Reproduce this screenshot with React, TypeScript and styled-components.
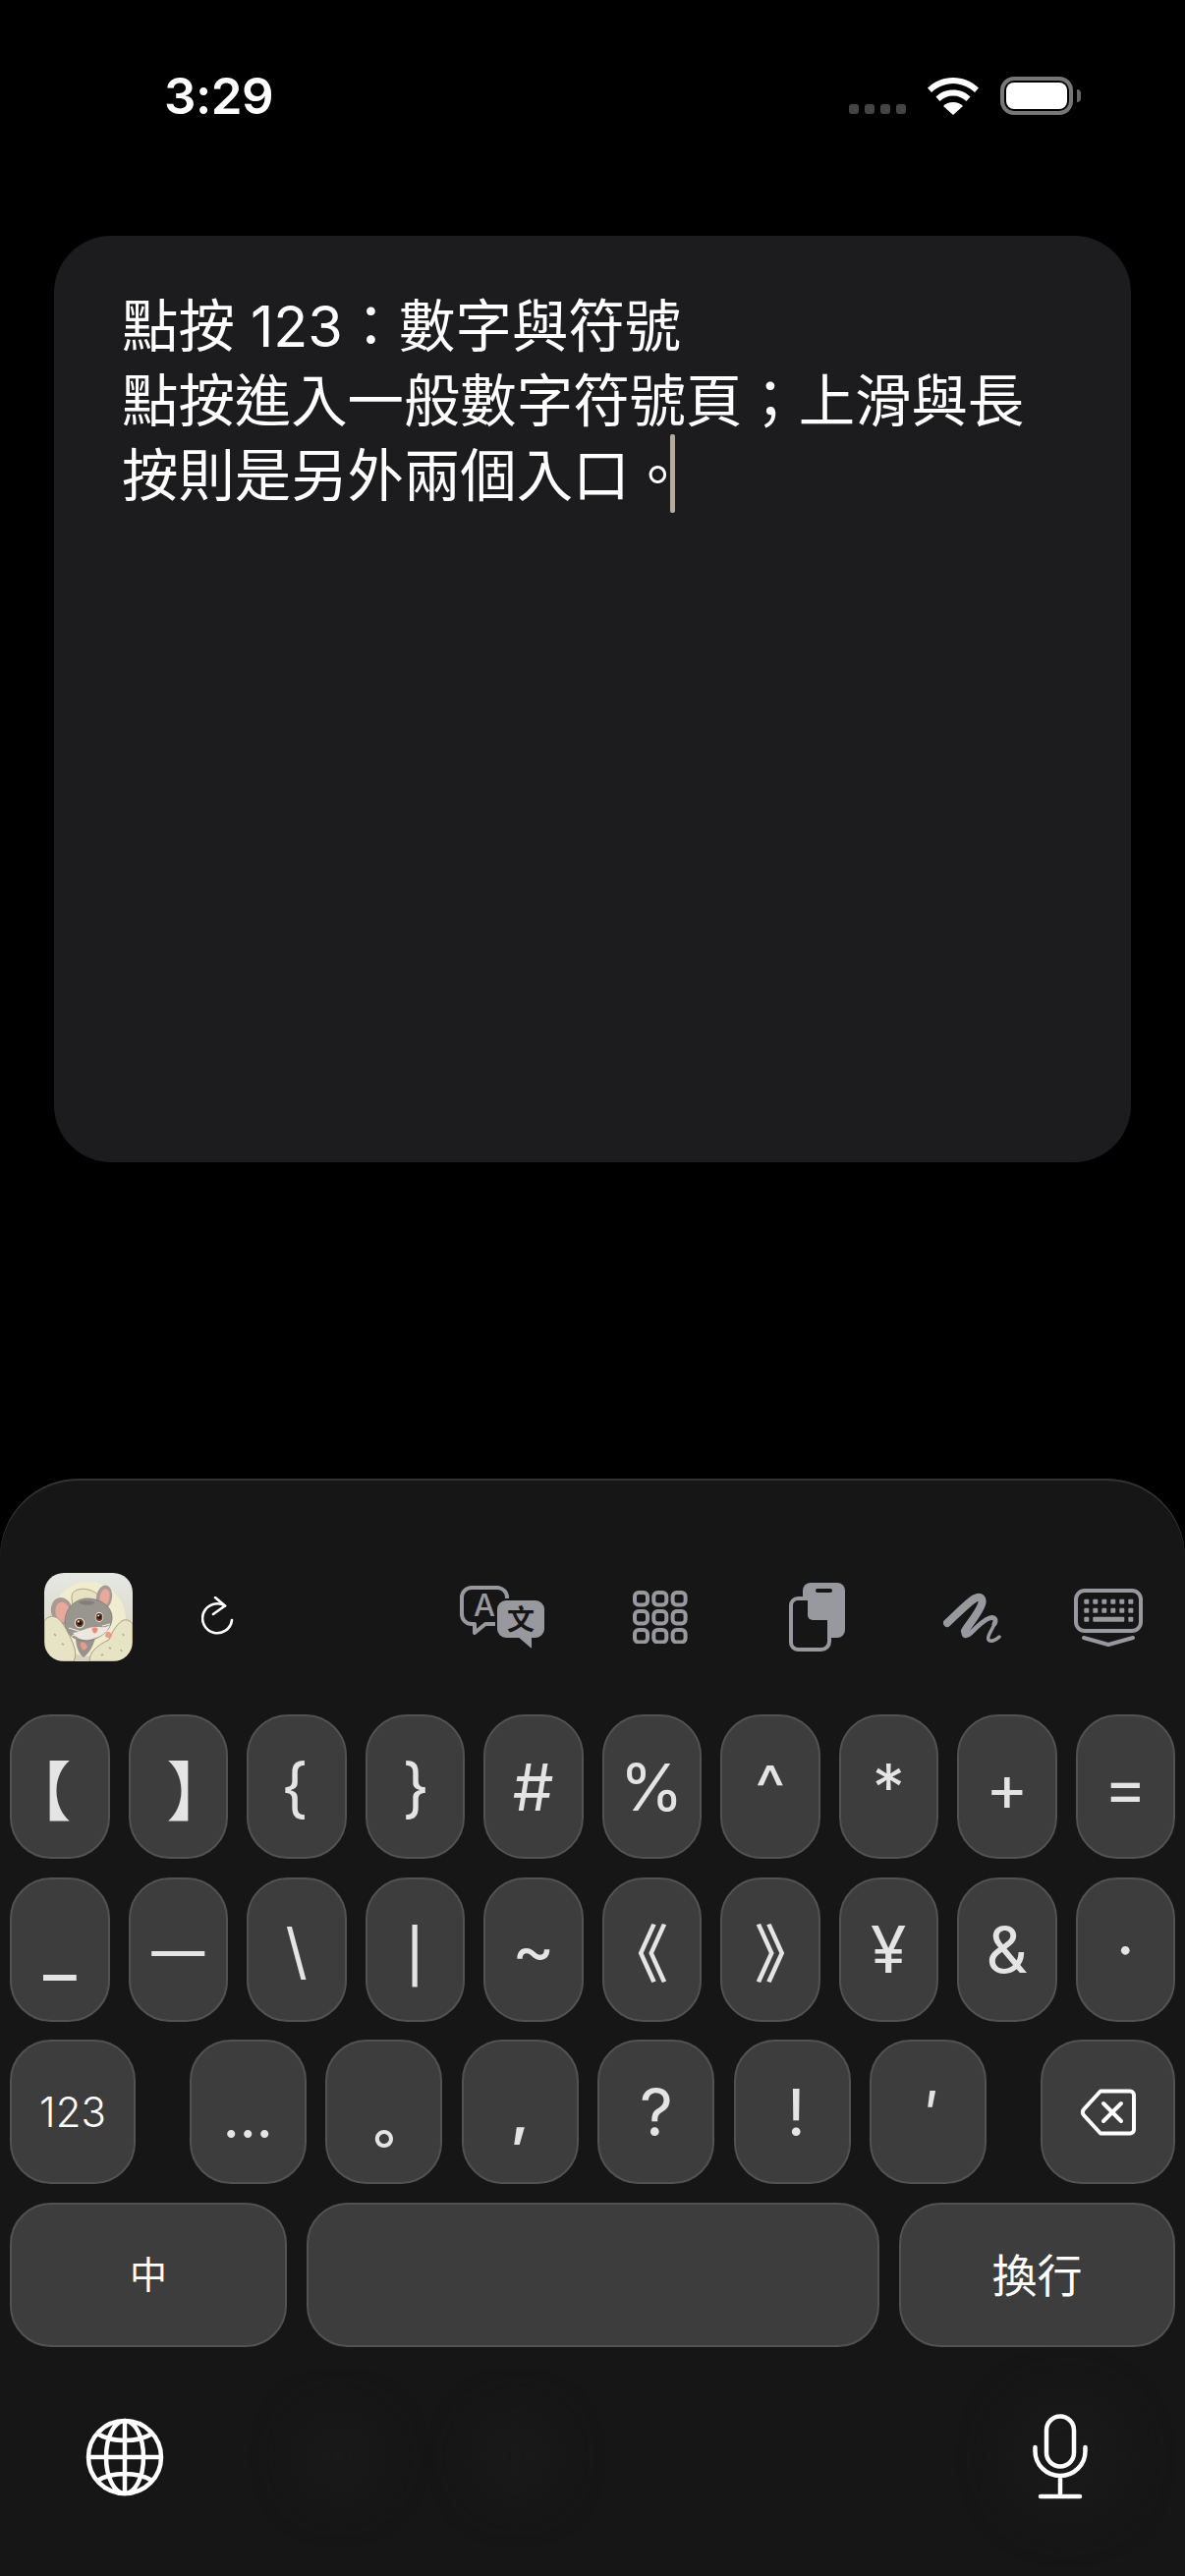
import React from "react";
import styled, { createGlobalStyle } from "styled-components";

const Global = createGlobalStyle`
  html, body { margin: 0; padding: 0; background: #000; }
  body { font-family: Inter, "Noto Sans CJK TC", sans-serif; }
  * { box-sizing: border-box; }
`;

const CJK = `"Noto Sans CJK TC", "Noto Sans CJK SC", sans-serif`;
const LATIN = `Inter, "Noto Sans CJK TC", sans-serif`;
const ICON = "#98989f";

const Screen = styled.div`
  width: 1206px;
  height: 2622px;
  background: #000;
  display: flex;
  flex-direction: column;
  overflow: hidden;
`;

const StatusBar = styled.header`
  height: 240px;
  flex: none;
  padding: 78px 114px 0 167px;
  display: flex;
  justify-content: space-between;
  align-items: flex-start;
`;

const Time = styled.div`
  color: #fff;
  font: 600 51px/39px Inter, sans-serif;
  letter-spacing: -0.5px;
`;

const StatusIcons = styled.div`
  display: flex;
  align-items: flex-end;
  height: 39px;
`;

const Dots = styled.div`
  display: flex;
  gap: 6px;
  margin: 0 22px 1px 0;
`;

const Dot = styled.span`
  width: 10px;
  height: 10px;
  border-radius: 3px;
  background: #444;
`;

const Battery = styled.div`
  width: 74px;
  height: 39px;
  margin-left: 22px;
  border: 4px solid #777;
  border-radius: 14px;
  padding: 2px;
  position: relative;
`;

const BatteryFill = styled.div`
  width: 100%;
  height: 100%;
  background: #fff;
  border-radius: 8px;
`;

const BatteryNub = styled.span`
  position: absolute;
  right: -12px;
  top: 9px;
  width: 4px;
  height: 13px;
  border-radius: 0 5px 5px 0;
  background: #666;
`;

const Card = styled.main`
  flex: none;
  height: 943px;
  margin: 0 55px;
  background: #1c1c1e;
  border-radius: 58px;
  padding: 54px 40px 0 69px;
  color: #fff;
  font: 400 57.4px/76px ${LATIN};
`;

const Line = styled.div`
  height: 76px;
  white-space: nowrap;
`;

const Caret = styled.span`
  position: absolute;
  width: 5px;
  height: 80px;
  margin: -4px 0 0 -16px;
  background: #b4ac9c;
  border-radius: 2px;
`;

const Spacer = styled.div`
  flex: 1;
`;

const Keyboard = styled.section`
  flex: none;
  height: 1117px;
  background: #161616;
  border-radius: 80px 80px 0 0;
  box-shadow: inset 0 2px 0 #323232;
  overflow: hidden;
`;

const Toolbar = styled.div`
  height: 240px;
  padding: 42px 43px 0 45px;
  display: flex;
  align-items: center;
`;

const ToolIcon = styled.svg<{ $gap?: number }>`
  display: block;
  flex: none;
  margin-left: ${(p) => p.$gap ?? 0}px;
`;

const Keys = styled.div`
  padding: 0 10px;
  display: flex;
  flex-direction: column;
  gap: 18.5px;
`;

const EvenRow = styled.div`
  display: grid;
  grid-template-columns: repeat(10, 1fr);
  gap: 19px;
`;

const SplitRow = styled.div`
  display: flex;
  justify-content: space-between;
`;

const MidKeys = styled.div`
  display: flex;
  gap: 19.5px;
`;

const WideRow = styled.div`
  display: grid;
  grid-template-columns: 282px 1fr 281px;
  gap: 20px;
`;

const Key = styled.div<{ $w?: number }>`
  height: 147px;
  ${(p) => (p.$w ? `width: ${p.$w}px;` : "")}
  background: #3d3d3d;
  border: 2px solid #525252;
  border-radius: 42px;
  display: flex;
  align-items: center;
  justify-content: center;
`;

const Label = styled.span<{
  $cjk?: boolean;
  $size?: number;
  $dx?: number;
  $dy?: number;
  $white?: boolean;
  $weight?: number;
  $italic?: boolean;
}>`
  display: block;
  color: ${(p) => (p.$white ? "#fff" : "#e4e4e4")};
  font-family: ${(p) => (p.$cjk ? CJK : LATIN)};
  font-size: ${(p) => p.$size ?? 66}px;
  font-weight: ${(p) => p.$weight ?? 400};
  font-style: ${(p) => (p.$italic ? "italic" : "normal")};
  line-height: 1;
  white-space: nowrap;
  transform: translate(${(p) => p.$dx ?? 0}px, ${(p) => p.$dy ?? 0}px);
`;

const Footer = styled.div`
  position: relative;
  margin-top: 67px;
  padding: 0 98px 0 87px;
  height: 90px;
  display: flex;
  justify-content: space-between;
  align-items: center;
`;

const Haze = styled.div<{ $left: number; $size: number }>`
  position: absolute;
  left: ${(p) => p.$left}px;
  top: ${(p) => 45 - p.$size / 2}px;
  width: ${(p) => p.$size}px;
  height: ${(p) => p.$size}px;
  border-radius: 50%;
  background: #191919;
  filter: blur(20px);
`;

const FooterIcon = styled.svg`
  position: relative;
  display: block;
`;

const BackspaceIcon = styled.svg`
  display: block;
`;

const WifiIcon = styled.svg`
  display: block;
`;

type K = { t: string; cjk?: boolean; size?: number; dx?: number; dy?: number; weight?: number; italic?: boolean };

const row1: K[] = [
  { t: "【", cjk: true, dx: -21 },
  { t: "】", cjk: true, dx: 21 },
  { t: "{", dx: -2 },
  { t: "}", dx: 1 },
  { t: "#" },
  { t: "%" },
  { t: "^" },
  { t: "*" },
  { t: "+" },
  { t: "=" },
];

const row2: K[] = [
  { t: "_", size: 74, dy: -1 },
  { t: "—", size: 54, dy: 2, weight: 500 },
  { t: "\\", size: 62, dy: 2 },
  { t: "|", size: 53, dy: 7, weight: 500 },
  { t: "~" },
  { t: "《", cjk: true, size: 64, dx: -15, weight: 500 },
  { t: "》", cjk: true, size: 64, dx: 16, weight: 500 },
  { t: "¥" },
  { t: "&" },
  { t: "·" },
];

const row3: K[] = [
  { t: "…", size: 56, dy: 6, weight: 500 },
  { t: "。", cjk: true, size: 56, dy: 24, weight: 700 },
  { t: ",", size: 60, weight: 600 },
  { t: "?" },
  { t: "!", dx: 4 },
  { t: "'", italic: true, size: 60 },
];

const KeyLabel = ({ k }: { k: K }) => (
  <Label $cjk={k.cjk} $size={k.size} $dx={k.dx} $dy={k.dy} $weight={k.weight} $italic={k.italic}>
    {k.t}
  </Label>
);

const Translate = () => (
  <ToolIcon width="88" height="64" viewBox="0 0 88 64" $gap={229}>
    <path
      d="M12 2h26a10 10 0 0 1 10 10v17a10 10 0 0 1-10 10H26L15 48v-9h-3A10 10 0 0 1 2 29V12A10 10 0 0 1 12 2Z"
      fill="none"
      stroke={ICON}
      strokeWidth="4"
      strokeLinejoin="round"
    />
    <text x="25" y="31" textAnchor="middle" fill={ICON} fontFamily="Inter, sans-serif" fontSize="31" fontWeight="500">
      A
    </text>
    <path
      d="M47 14h30a10 10 0 0 1 10 10v20a10 10 0 0 1-10 10h-3v9a1.5 1.5 0 0 1-2.5 1L60 54H47a10 10 0 0 1-10-10V24a10 10 0 0 1 10-10Z"
      fill={ICON}
      stroke="#161616"
      strokeWidth="2"
    />
    <text x="62" y="45" textAnchor="middle" fill="#161616" fontFamily={CJK} fontSize="28" fontWeight="700">
      文
    </text>
  </ToolIcon>
);

const Grid = () => (
  <ToolIcon width="56" height="54" viewBox="0 0 56 54" $gap={88}>
    {[0, 1, 2].map((r) =>
      [0, 1, 2].map((c) => (
        <rect key={`${r}${c}`} x={2 + c * 19.3} y={2 + r * 19} width="13" height="12.5" rx="4" fill="none" stroke={ICON} strokeWidth="4" />
      ))
    )}
  </ToolIcon>
);

const Clipboard = () => (
  <ToolIcon width="57" height="70" viewBox="0 0 57 70" $gap={103}>
    <rect x="14" y="0" width="43" height="56" rx="8" fill={ICON} />
    <rect x="27" y="6" width="17" height="4" rx="2" fill="#161616" />
    <path
      d="M9 16h13a4 4 0 0 1 3 1.3l15 17a5 5 0 0 1 1 3V60a8 8 0 0 1-8 8H9a7 7 0 0 1-7-7V23a7 7 0 0 1 7-7Z"
      fill="#161616"
      stroke={ICON}
      strokeWidth="4"
    />
    <path d="M19 16l3-1 20 23H24a5 5 0 0 1-5-5Z" fill={ICON} />
  </ToolIcon>
);

const Scribble = () => (
  <ToolIcon width="60" height="54" viewBox="0 0 60 54" $gap={100}>
    <path d="M4 33C14 24 24 13 32 8c6-3 9 0 7 6-3 9-12 19-17 27" fill="none" stroke={ICON} strokeWidth="8" strokeLinecap="round" />
    <path d="M22 41c-3 6 2 6 6 2 6-6 13-13 19-15 6-2 7 2 5 6" fill="none" stroke={ICON} strokeWidth="5" strokeLinecap="round" />
    <path d="M52 34c-2 6-8 12-6 16 2 3 8 0 11-3" fill="none" stroke={ICON} strokeWidth="3.5" strokeLinecap="round" />
  </ToolIcon>
);

const KeyboardDown = () => (
  <ToolIcon width="70" height="59" viewBox="0 0 70 59" $gap={73}>
    <rect x="2" y="2" width="66" height="41" rx="9" fill="none" stroke={ICON} strokeWidth="4" />
    {[0, 1].map((r) =>
      [0, 1, 2, 3, 4, 5].map((c) => (
        <rect key={`${r}${c}`} x={10.3 + c * 9} y={10.7 + r * 9} width="5" height="5" rx="1" fill={ICON} />
      ))
    )}
    <rect x="10.3" y="28.7" width="5" height="5" rx="1" fill={ICON} />
    <rect x="19.3" y="28.7" width="32" height="5" rx="1" fill={ICON} />
    <rect x="55.3" y="28.7" width="5" height="5" rx="1" fill={ICON} />
    <path d="M10 50l25 7 25-7" fill="none" stroke={ICON} strokeWidth="4" strokeLinecap="round" strokeLinejoin="round" />
  </ToolIcon>
);

const Refresh = () => (
  <ToolIcon width="34" height="42" viewBox="0 0 34 42" $gap={70}>
    <path d="M24 9.500A15 15 0 1 0 31 24" fill="none" stroke="#fff" strokeWidth="2.600" strokeLinecap="round" />
    <path d="M14 1l10 8.500L12 18" fill="none" stroke="#fff" strokeWidth="2.600" strokeLinecap="round" strokeLinejoin="round" />
  </ToolIcon>
);

const MouseLogo = () => (
  <ToolIcon width="90" height="90" viewBox="0 0 90 90">
    <defs>
      <linearGradient id="bg" x1="0" y1="0" x2="0" y2="1">
        <stop offset="0" stopColor="#e6e8e4" />
        <stop offset="1" stopColor="#d5d1bb" />
      </linearGradient>
      <clipPath id="squircle">
        <rect width="90" height="90" rx="20" />
      </clipPath>
      <filter id="soft">
        <feGaussianBlur stdDeviation="0.35" />
      </filter>
    </defs>
    <g clipPath="url(#squircle)">
      <g filter="url(#soft)">
        <rect width="90" height="90" fill="url(#bg)" />
        <circle cx="45" cy="47" r="38" fill="#efeccf" />
        <path d="M28 26c-1-9 9-11 17-9 7 2 12 6 15 12l-6 14H30Z" fill="#e7e2bf" stroke="#b99f87" strokeWidth="1" />
        <path d="M40 86c-5-4-7-10-8-18l20-2c-2 8-6 16-12 20Z" fill="#97928d" />
        <ellipse cx="18" cy="39" rx="11" ry="14" fill="#a69a93" transform="rotate(-12 18 39)" />
        <ellipse cx="19" cy="40" rx="7.500" ry="10.500" fill="#e8a89b" transform="rotate(-12 19 40)" />
        <ellipse cx="61" cy="25" rx="8" ry="12.500" fill="#a69a93" transform="rotate(10 61 25)" />
        <ellipse cx="61.500" cy="25" rx="5" ry="9" fill="#e8a89b" transform="rotate(10 61.500 25)" />
        <path d="M21 50c0-14 11-24 23-24s24 7 25 18c1 12-10 23-25 25-13 1-23-7-23-19Z" fill="#99958f" stroke="#7f746c" strokeWidth="0.700" />
        <path d="M35 30c5-3 12-2 17 0-3 3-12 4-17 0Z" fill="#827e7a" />
        <path d="M29 61c8-1 14-6 24-6 5 0 10 1 14-2-2 7-10 13-21 15-8 1-14-2-17-7Z" fill="#ece7df" />
        <circle cx="36" cy="51" r="5.200" fill="#efeadc" />
        <circle cx="36" cy="51" r="4.200" fill="#6a3f2a" />
        <circle cx="36" cy="51" r="2.300" fill="#1e1612" />
        <circle cx="34.800" cy="49.500" r="1" fill="#fff" />
        <ellipse cx="56" cy="45" rx="4.200" ry="4.900" fill="#efeadc" />
        <ellipse cx="56" cy="45" rx="3.400" ry="4.100" fill="#6a3f2a" />
        <circle cx="56" cy="45" r="2" fill="#1e1612" />
        <circle cx="55.200" cy="43.600" r="0.900" fill="#fff" />
        <path d="M48.500 56.500c1.500-1.500 5-1.500 6 0 0 2.500-1.500 5-3 5s-3-3-3-5Z" fill="#ef8a78" />
        <path d="M25 56l13 4M28 64l12-2M59 54l8-2M58 60l9-1" stroke="#f3efe6" strokeWidth="1.100" fill="none" />
        <path d="M0 49C6 41 14 44 19 52c5 8 9 15 12 25 1 5 1 9-1 13H0Z" fill="#e7e3c5" stroke="#b09a80" strokeWidth="1" />
        <path d="M46 90c0-9 7-16 20-22 3-8 9-18 15-20 4-1 9 2 9 5v37Z" fill="#e7e3c5" stroke="#b09a80" strokeWidth="1" />
        <path d="M37 71c2-1 5 0 6 2l1 3-4 3-3-4Z" fill="#e79b8a" />
        <path d="M63 60c3-1 6 1 6 4l-2 3-5-2Z" fill="#e79b8a" />
        <path d="M10 62l2 2M18 72l2 1M66 76l2 1M58 84l2-1M80 62l1 2M78 78l1 2" stroke="#a7ab7b" strokeWidth="1.500" />
      </g>
    </g>
  </ToolIcon>
);

const Wifi = () => (
  <WifiIcon width="52" height="38" viewBox="0 0 52 38">
    <path d="M26 0C16 0 7 4 0 10.500l4 4.500C10 9.500 18 6 26 6s16 3.500 22 9l4-4.500C45 4 36 0 26 0Z" fill="#fff" />
    <path d="M26 12.500c-7 0-13 2.500-17.500 7l4 4.500c3.500-3.500 8.500-5.500 13.500-5.500s10 2 13.500 5.500l4-4.500C39 15 33 12.500 26 12.500Z" fill="#fff" />
    <path d="M26 25c-4 0-7.500 1.500-10 4l10 9 10-9c-2.500-2.500-6-4-10-4Z" fill="#fff" />
  </WifiIcon>
);

const Globe = () => (
  <FooterIcon width="80" height="80" viewBox="0 0 80 80" fill="none" stroke="#fff" strokeWidth="4.500">
    <circle cx="40" cy="40" r="37" />
    <ellipse cx="40" cy="40" rx="19" ry="37" />
    <path d="M40 3v74M3 40h74M12 16c8 5 18 7 28 7s20-2 28-7M12 64c8-5 18-7 28-7s20 2 28 7" />
  </FooterIcon>
);

const Mic = () => (
  <FooterIcon width="58" height="88" viewBox="0 0 58 88" fill="none" stroke="#fff" strokeWidth="4.500" strokeLinecap="round">
    <rect x="15" y="2.500" width="28" height="51" rx="14" />
    <path d="M3.500 34v4a25.500 25 0 0 0 51 0v-4M29 63v21M9 84h40" />
  </FooterIcon>
);

const Backspace = () => (
  <BackspaceIcon width="58" height="48" viewBox="0 0 58 48" fill="none" stroke="#fff" strokeWidth="4" strokeLinejoin="round" strokeLinecap="round">
    <path d="M21 2.500h30a4 4 0 0 1 4 4v35a4 4 0 0 1-4 4H21L4 27a4.500 4.500 0 0 1 0-6Z" />
    <path d="M24 15l18 18M42 15L24 33" />
  </BackspaceIcon>
);

export default function App() {
  return (
    <>
      <Global />
      <Screen>
        <StatusBar>
          <Time>3:29</Time>
          <StatusIcons>
            <Dots>
              <Dot />
              <Dot />
              <Dot />
              <Dot />
            </Dots>
            <Wifi />
            <Battery>
              <BatteryFill />
              <BatteryNub />
            </Battery>
          </StatusIcons>
        </StatusBar>
        <Card>
          <Line>點按 123：數字與符號</Line>
          <Line>點按進入一般數字符號頁；上滑與長</Line>
          <Line>
            按則是另外兩個入口。
            <Caret />
          </Line>
        </Card>
        <Spacer />
        <Keyboard>
          <Toolbar>
            <MouseLogo />
            <Refresh />
            <Translate />
            <Grid />
            <Clipboard />
            <Scribble />
            <KeyboardDown />
          </Toolbar>
          <Keys>
            <EvenRow>
              {row1.map((k) => (
                <Key key={k.t}>
                  <KeyLabel k={k} />
                </Key>
              ))}
            </EvenRow>
            <EvenRow>
              {row2.map((k) => (
                <Key key={k.t}>
                  <KeyLabel k={k} />
                </Key>
              ))}
            </EvenRow>
            <SplitRow>
              <Key $w={128}>
                <Label $white $size={42} $weight={350}>
                  123
                </Label>
              </Key>
              <MidKeys>
                {row3.map((k) => (
                  <Key key={k.t} $w={119}>
                    <KeyLabel k={k} />
                  </Key>
                ))}
              </MidKeys>
              <Key $w={137}>
                <Backspace />
              </Key>
            </SplitRow>
            <WideRow>
              <Key>
                <Label $cjk $white $size={38} $dy={-2}>
                  中
                </Label>
              </Key>
              <Key />
              <Key>
                <Label $cjk $white $size={46} $dy={-2}>
                  換行
                </Label>
              </Key>
            </WideRow>
          </Keys>
          <Footer>
            <Haze $left={300} $size={90} />
            <Haze $left={480} $size={90} />
            <Haze $left={1020} $size={130} />
            <Globe />
            <Mic />
          </Footer>
        </Keyboard>
      </Screen>
    </>
  );
}
